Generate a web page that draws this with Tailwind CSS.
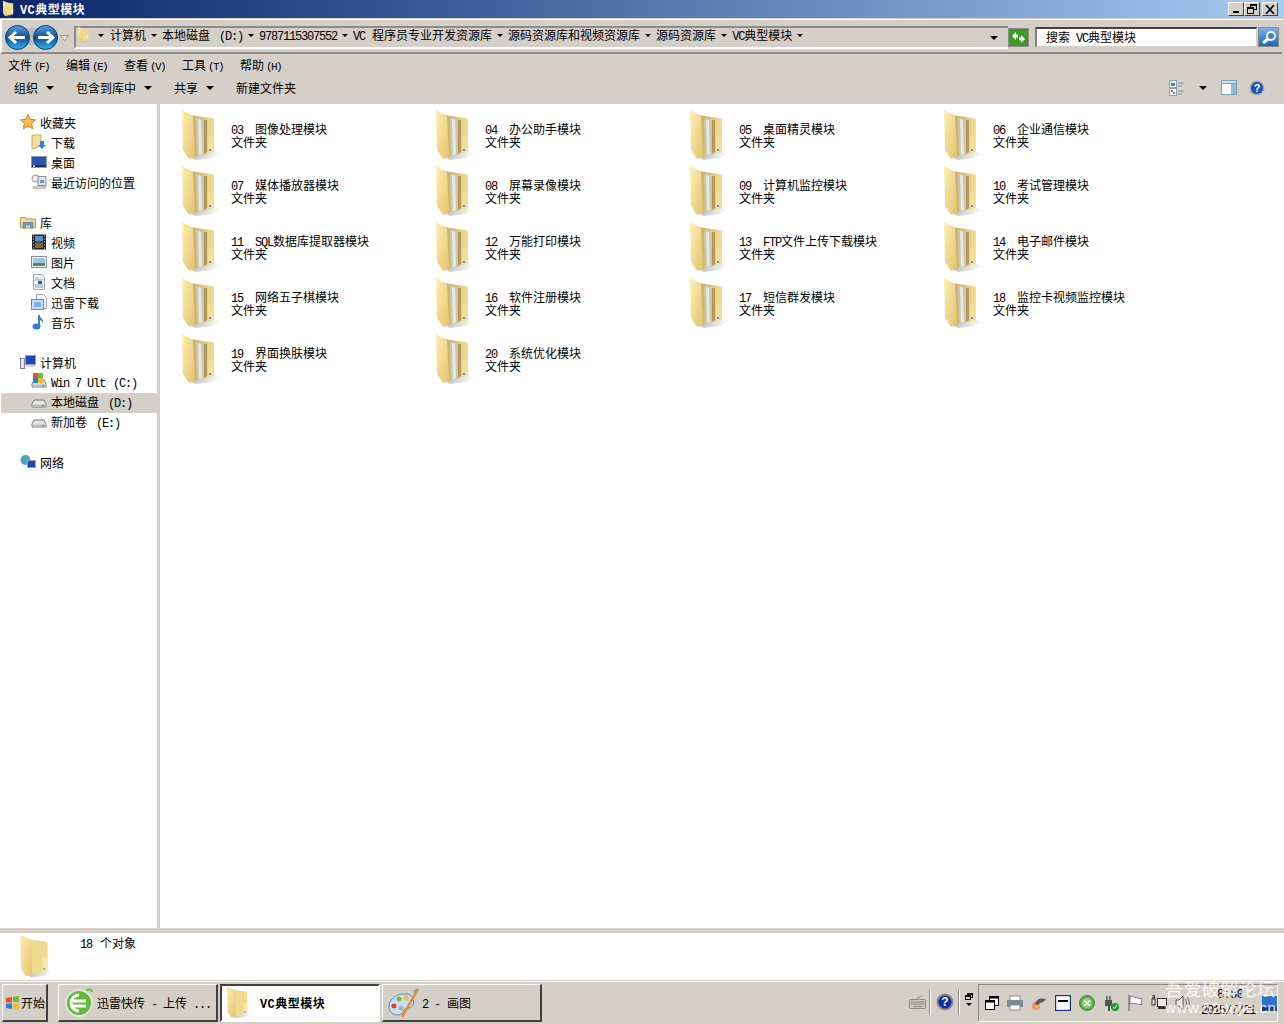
<!DOCTYPE html>
<html lang="zh-CN">
<head>
  <meta charset="UTF-8">
  <title>VC典型模块</title>
  <script src="https://cdn.jsdelivr.net/npm/@tailwindcss/browser@4"></script>
</head>
<body class="bg-white text-black text-[12px] leading-[13px] font-['Noto_Sans_CJK_SC',sans-serif]">
  <svg class="absolute w-0 h-0">
    <defs>
      <linearGradient id="flap" x1="0" y1="0" x2="1" y2="1"><stop offset="0" stop-color="#fdf0b4"/><stop offset="1" stop-color="#e3c36c"/></linearGradient>
      <linearGradient id="backp" x1="0" y1="0" x2="1" y2="0"><stop offset="0" stop-color="#c9a95c"/><stop offset="1" stop-color="#f3dd92"/></linearGradient>
      <linearGradient id="orb" x1="0" y1="0" x2="0" y2="1"><stop offset="0" stop-color="#5d9fe0"/><stop offset=".5" stop-color="#0b4f9c"/><stop offset="1" stop-color="#35b4e8"/></linearGradient>
      <linearGradient id="shade" x1="0" y1="0" x2="1" y2="0"><stop offset="0" stop-color="#8a8a8a" stop-opacity=".55"/><stop offset="1" stop-color="#8a8a8a" stop-opacity="0"/></linearGradient>
      <symbol id="folder" viewBox="0 0 50 56">
        <polygon points="14,49 36,44 45,45 36,50 20,52" fill="url(#shade)"/>
        <polygon points="14,7 35,10 38,11 38,44 18,49" fill="url(#backp)"/>
        <polygon points="20,10 27,11 28,47 21,49" fill="#c9c7b8"/>
        <polygon points="22,11 25,12 26,46 23,47" fill="#e8e8e2"/>
        <polygon points="28,12 31,12 31,44 28,46" fill="#b3995a"/>
        <polygon points="32,28 38,27 38,44 32,46" fill="#f3de98"/>
        <rect x="33" y="41" width="2" height="2" fill="#5b8fd0"/>
        <polygon points="6,2 17,8 19,48 13,51 7,42" fill="url(#flap)"/>
      </symbol>
      <symbol id="folder-closed" viewBox="0 0 50 56">
        <polygon points="14,49 36,44 45,45 36,50 20,52" fill="url(#shade)"/>
        <polygon points="14,7 35,10 38,11 38,44 18,49" fill="#f0da90"/>
        <polygon points="32,28 38,27 38,44 32,46" fill="#f7e7ac"/>
        <rect x="33" y="41" width="2" height="2" fill="#5b8fd0"/>
        <polygon points="6,2 19,8 20,48 13,51 7,42" fill="url(#flap)"/>
      </symbol>
      <symbol id="drive" viewBox="0 0 16 16">
        <path d="M3 6h10l2 4v3H1v-3z" fill="#e6e6e2" stroke="#77797b"/>
        <path d="M1.500 10.500h13v2.500h-13z" fill="#b9bcbd"/>
        <rect x="11" y="11" width="2" height="1.500" fill="#56b04a"/>
      </symbol>
    </defs>
  </svg>

  <div class="relative w-[1284px] h-[1024px] overflow-hidden flex flex-col bg-white">
    <!-- title bar -->
    <div class="h-[18px] flex items-center bg-gradient-to-r from-[#0a246a] to-[#a6caf0] shrink-0">
      <svg class="w-4 h-[18px] ml-px"><use href="#folder-closed"/></svg>
      <span class="ml-[3px] text-white font-bold tracking-[0.5px]"><span class="text-[12px] leading-[9px] tracking-[0.4px] font-['Liberation_Mono']">VC</span>典型模块</span>
      <div class="ml-auto mr-[6px] flex items-center">
        <div class="w-4 h-[14px] bg-[#d4d0c8] border-t border-l border-t-white border-l-white border-r border-b border-r-[#404040] border-b-[#404040] flex items-end justify-center pb-[2px]"><div class="w-[6px] h-[2px] bg-black"></div></div>
        <div class="w-4 h-[14px] ml-0 bg-[#d4d0c8] border-t border-l border-t-white border-l-white border-r border-b border-r-[#404040] border-b-[#404040] relative">
          <div class="absolute left-[5px] top-[1px] w-[7px] h-[6px] border border-black border-t-2"></div>
          <div class="absolute left-[2px] top-[4px] w-[7px] h-[7px] bg-[#d4d0c8] border border-black border-t-2"></div>
        </div>
        <div class="w-4 h-[14px] ml-[2px] bg-[#d4d0c8] border-t border-l border-t-white border-l-white border-r border-b border-r-[#404040] border-b-[#404040] flex items-center justify-center">
          <svg width="10" height="9" viewBox="0 0 10 9"><path d="M1 0l8 9M9 0l-8 9" stroke="#000" stroke-width="1.600"/></svg>
        </div>
      </div>
    </div>

    <!-- address row -->
    <div class="h-[36px] shrink-0 bg-[#d4d0c8] pt-px pr-[2px]">
      <div class="h-[35px] flex items-start border-t border-l-2 border-b-2 border-t-white border-l-white border-b-[#8d8b87] relative">
        <!-- back / forward -->
        <div class="relative w-[72px] h-[33px] shrink-0">
          <div class="absolute left-[8px] top-[8px] w-[46px] h-[17px] bg-[#bcbab6] rounded-[9px]"></div>
          <svg class="absolute left-[3px] top-[5px]" width="25" height="25" viewBox="0 0 25 25"><circle cx="12.500" cy="12.500" r="12" fill="url(#orb)" stroke="#0b3d78"/><path d="M5 12.500h15M11 7l-6 5.500 6 5.500" fill="none" stroke="#fff" stroke-width="3"/></svg>
          <svg class="absolute left-[31px] top-[5px]" width="25" height="25" viewBox="0 0 25 25"><circle cx="12.500" cy="12.500" r="12" fill="url(#orb)" stroke="#0b3d78"/><path d="M5 12.500h15M14 7l6 5.500-6 5.500" fill="none" stroke="#fff" stroke-width="3"/></svg>
          <svg class="absolute left-[58px] top-[15px]" width="9" height="6" viewBox="0 0 9 6"><path d="M.5.500h8l-4 5z" fill="#f2f1ee" stroke="#8d8b87"/></svg>
        </div>
        <!-- address box -->
        <div class="w-[934px] h-[23px] mt-[6px] pb-[6px] shrink-0 flex items-center border-t-2 border-l-2 border-t-[#8d8b87] border-l-[#8d8b87] border-b-2 border-b-white relative">
          <svg class="w-4 h-[18px] shrink-0"><use href="#folder-closed"/></svg>
          <div class="flex items-center gap-[5px] ml-[6px] whitespace-pre">
            <span class="mr-[1px] mt-[2px] w-0 h-0 border-x-[3px] border-t-[3px] border-x-transparent border-t-black"></span>
            <span>计算机</span>
            <span class="mt-[2px] w-0 h-0 border-x-[3px] border-t-[3px] border-x-transparent border-t-black"></span>
            <span>本地磁盘<span class="ml-[9px] text-[12px] leading-[9px] tracking-[-1.2px] font-['Liberation_Mono']">(D:)</span></span>
            <span class="mt-[2px] w-0 h-0 border-x-[3px] border-t-[3px] border-x-transparent border-t-black"></span>
            <span><span class="text-[12px] leading-[9px] tracking-[-1.2px] font-['Liberation_Mono']">9787115307552</span></span>
            <span class="mt-[2px] w-0 h-0 border-x-[3px] border-t-[3px] border-x-transparent border-t-black"></span>
            <span><span class="mr-[7px] text-[12px] leading-[9px] tracking-[-1.2px] font-['Liberation_Mono']">VC</span>程序员专业开发资源库</span>
            <span class="mt-[2px] w-0 h-0 border-x-[3px] border-t-[3px] border-x-transparent border-t-black"></span>
            <span>源码资源库和视频资源库</span>
            <span class="mt-[2px] w-0 h-0 border-x-[3px] border-t-[3px] border-x-transparent border-t-black"></span>
            <span>源码资源库</span>
            <span class="mt-[2px] w-0 h-0 border-x-[3px] border-t-[3px] border-x-transparent border-t-black"></span>
            <span><span class="text-[12px] leading-[9px] tracking-[-1.2px] font-['Liberation_Mono']">VC</span>典型模块</span>
            <span class="mt-[2px] w-0 h-0 border-x-[3px] border-t-[3px] border-x-transparent border-t-black"></span>
          </div>
          <span class="absolute left-[914px] top-[8px] w-0 h-0 border-x-[4px] border-t-[4px] border-x-transparent border-t-black"></span>
        </div>
        <!-- refresh -->
        <div class="w-[21px] h-[19px] mt-[8px] shrink-0 border border-[#8d8b87] bg-[#3a9a22] flex items-center justify-center">
          <svg width="15" height="13" viewBox="0 0 15 13"><path d="M1 5l4-4v2.500h2v3H5V9zM14 8l-4 4V9.500H8v-3h2V4z" fill="#fff"/></svg>
        </div>
        <!-- search -->
        <div class="w-[222px] h-[20px] mt-[7px] ml-[6px] pb-[2px] shrink-0 bg-white border-t-2 border-l-2 border-t-[#404040] border-l-[#808080] border-r border-b border-r-[#d4d0c8] border-b-[#d4d0c8] pl-[9px] flex items-center whitespace-pre"><span>搜索<span class="ml-[6px] text-[12px] leading-[9px] tracking-[-1.2px] font-['Liberation_Mono']">VC</span>典型模块</span></div>
        <div class="w-[21px] h-[20px] mt-[7px] ml-px shrink-0 border border-[#8d8b87] bg-gradient-to-b from-[#79b2ec] to-[#1f63b8] flex items-center justify-center">
          <svg width="16" height="15" viewBox="0 0 16 15"><circle cx="10" cy="6" r="4" fill="#3b7fcb" stroke="#fff" stroke-width="2"/><path d="M7 9l-5 4" stroke="#fff" stroke-width="3"/></svg>
        </div>
      </div>
    </div>

    <!-- menu bar -->
    <div class="h-[20px] shrink-0 bg-[#d4d0c8] flex items-center pl-[8px] whitespace-pre">
      <span class="w-[58px]">文件<span class="ml-[2px] text-[11px] leading-[8px] tracking-[-1.6px] font-['Liberation_Mono']">(F)</span></span>
      <span class="w-[58px]">编辑<span class="ml-[2px] text-[11px] leading-[8px] tracking-[-1.6px] font-['Liberation_Mono']">(E)</span></span>
      <span class="w-[58px]">查看<span class="ml-[2px] text-[11px] leading-[8px] tracking-[-1.6px] font-['Liberation_Mono']">(V)</span></span>
      <span class="w-[58px]">工具<span class="ml-[2px] text-[11px] leading-[8px] tracking-[-1.6px] font-['Liberation_Mono']">(T)</span></span>
      <span>帮助<span class="ml-[2px] text-[11px] leading-[8px] tracking-[-1.6px] font-['Liberation_Mono']">(H)</span></span>
    </div>

    <!-- toolbar -->
    <div class="h-[30px] shrink-0 bg-[#d4d0c8] flex items-center pl-[14px] pr-[19px] pb-[3px]">
      <span>组织</span>
      <span class="ml-[8px] mt-[1px] w-0 h-0 border-x-[4px] border-t-[4px] border-x-transparent border-t-black"></span>
      <span class="ml-[22px]">包含到库中</span>
      <span class="ml-[8px] mt-[1px] w-0 h-0 border-x-[4px] border-t-[4px] border-x-transparent border-t-black"></span>
      <span class="ml-[22px]">共享</span>
      <span class="ml-[8px] mt-[1px] w-0 h-0 border-x-[4px] border-t-[4px] border-x-transparent border-t-black"></span>
      <span class="ml-[22px]">新建文件夹</span>
      <svg class="ml-auto" width="16" height="16" viewBox="0 0 16 16"><rect x=".5" y=".5" width="7" height="7" fill="#f4f6f8" stroke="#8aa0b5"/><rect x="2" y="3" width="4" height="3" fill="#5c8a6a"/><rect x=".5" y="8.500" width="7" height="7" fill="#f4f6f8" stroke="#8aa0b5"/><rect x="2" y="10" width="2" height="2" fill="#c9503c"/><rect x="4" y="12" width="2" height="2" fill="#4a9a4a"/><path d="M9 3h6M9 6h4M9 11h6M9 14h4" stroke="#7890a8"/></svg>
      <span class="ml-[14px] w-0 h-0 border-x-[4px] border-t-[4px] border-x-transparent border-t-black"></span>
      <svg class="ml-[14px]" width="16" height="15" viewBox="0 0 16 15"><rect x=".5" y=".5" width="15" height="14" fill="#fff" stroke="#7f9db9"/><rect x=".5" y=".5" width="15" height="3" fill="#cfe0ef" stroke="#7f9db9"/><rect x="10" y="4" width="5" height="10" fill="#8fbbe0"/></svg>
      <svg class="ml-[12px]" width="16" height="16" viewBox="0 0 16 16"><circle cx="8" cy="8" r="7.500" fill="#a8a8a8"/><circle cx="8" cy="8" r="6" fill="#1c4fb0"/><text x="8" y="12" font-size="11" font-weight="bold" text-anchor="middle" fill="#fff" font-family="Liberation Sans">?</text></svg>
    </div>

    <!-- main area -->
    <div class="flex flex-1 min-h-0">
      <aside class="w-[157px] shrink-0 pt-[9px] pl-px">
        <div class="h-5 pb-[2px] flex items-center pl-[19px] gap-[4px]">
          <svg width="16" height="16" viewBox="0 0 16 16"><path d="M8 .5l2.200 4.900 5.300.5-4 3.600 1.200 5.300L8 12l-4.700 2.800 1.200-5.300-4-3.600 5.300-.5z" fill="#f8c04a" stroke="#e0752a"/></svg>
          <span>收藏夹</span>
        </div>
        <div class="h-5 pb-[2px] flex items-center pl-[30px] gap-[4px]">
          <svg width="16" height="16" viewBox="0 0 16 16"><path d="M1 1h9v11l-9 3z" fill="#f5e09a" stroke="#c9a95c"/><path d="M9 7h4v4h2l-4 4-4-4h2z" fill="#2f86d8"/></svg>
          <span>下载</span>
        </div>
        <div class="h-5 pb-[2px] flex items-center pl-[30px] gap-[4px]">
          <svg width="16" height="16" viewBox="0 0 16 16"><rect x=".5" y="2.500" width="15" height="11" fill="#2c55b0" stroke="#8a9aa8"/><rect x="1" y="11" width="14" height="2" fill="#23304a"/><rect x="2" y="11" width="2" height="2" fill="#e8b23c"/></svg>
          <span>桌面</span>
        </div>
        <div class="h-5 pb-[2px] flex items-center pl-[30px] gap-[4px]">
          <svg width="16" height="16" viewBox="0 0 16 16"><circle cx="4.500" cy="4.500" r="3.500" fill="#eef0ee" stroke="#8c8f8c"/><rect x="7" y="2.500" width="8" height="9" fill="#dfe3e3" stroke="#8c8f8c"/><rect x="9" y="6" width="4" height="3" fill="#5f94d0"/><rect x="2" y="12" width="13" height="3" fill="#c4c6c2"/></svg>
          <span>最近访问的位置</span>
        </div>
        <div class="h-5"></div>
        <div class="h-5 pb-[2px] flex items-center pl-[19px] gap-[4px]">
          <svg width="16" height="16" viewBox="0 0 16 16"><path d="M.5 3.500h5l1 1.500h9v9H.5z" fill="#f5de90" stroke="#b99a52"/><path d="M3 14V8.500h10V14h-2.500v-3h-5v3z" fill="#6fa0d4" stroke="#3c6ea8" stroke-width=".6"/></svg>
          <span>库</span>
        </div>
        <div class="h-5 pb-[2px] flex items-center pl-[30px] gap-[4px]">
          <svg width="16" height="16" viewBox="0 0 16 16"><rect x="1" y=".5" width="14" height="15" fill="#22262b"/><rect x="4" y="2" width="8" height="5.500" fill="#5a8cc8"/><rect x="4" y="8.500" width="8" height="5.500" fill="#7a6a3a"/><path d="M2 2h1M2 5h1M2 8h1M2 11h1M2 14h1M13 2h1M13 5h1M13 8h1M13 11h1M13 14h1" stroke="#dfe3e8"/></svg>
          <span>视频</span>
        </div>
        <div class="h-5 pb-[2px] flex items-center pl-[30px] gap-[4px]">
          <svg width="16" height="16" viewBox="0 0 16 16"><rect x=".5" y="2.500" width="15" height="11" fill="#f4f5f2" stroke="#8a9095"/><rect x="2" y="4" width="12" height="5" fill="#9ac4e8"/><rect x="2" y="9" width="12" height="3" fill="#4f9060"/></svg>
          <span>图片</span>
        </div>
        <div class="h-5 pb-[2px] flex items-center pl-[30px] gap-[4px]">
          <svg width="16" height="16" viewBox="0 0 16 16"><path d="M2.500.5h8l3 3v12h-11z" fill="#fbfbfb" stroke="#9aa0a6"/><path d="M4 6h8M4 11h8M4 13h8M4 4h4" stroke="#7d9cc0"/><rect x="7" y="7" width="4" height="3" fill="#345f96"/></svg>
          <span>文档</span>
        </div>
        <div class="h-5 pb-[2px] flex items-center pl-[30px] gap-[4px]">
          <svg width="16" height="16" viewBox="0 0 16 16"><path d="M5.500.5h7l3 3v11h-10z" fill="#f4f6f8" stroke="#9aa8b8"/><rect x=".5" y="5.500" width="12" height="10" fill="#c8dcf2" stroke="#5a8cc0"/><rect x="3" y="8" width="7" height="5" fill="#79b4ea"/></svg>
          <span>迅雷下载</span>
        </div>
        <div class="h-5 pb-[2px] flex items-center pl-[30px] gap-[4px]">
          <svg width="16" height="16" viewBox="0 0 16 16"><path d="M8 1v11" stroke="#1a5fb0" stroke-width="1.600"/><ellipse cx="5.500" cy="12.500" rx="4" ry="3" fill="#2c7fd6"/><path d="M8 1c1 3 5 4 4 8-.5-2-2-3-4-3z" fill="#2c7fd6"/></svg>
          <span>音乐</span>
        </div>
        <div class="h-5"></div>
        <div class="h-5 pb-[2px] flex items-center pl-[19px] gap-[4px]">
          <svg width="16" height="16" viewBox="0 0 16 16"><rect x="5.500" y="1.500" width="10" height="9" fill="#1a46c0" stroke="#9aa0a6"/><rect x="6" y="11" width="9" height="2" fill="#cfd2d4"/><rect x=".5" y="4.500" width="4" height="10" fill="#e6e8e8" stroke="#7d8286"/></svg>
          <span>计算机</span>
        </div>
        <div class="h-5 pb-[2px] flex items-center pl-[30px] gap-[4px] whitespace-pre">
          <span class="relative w-4 h-4">
            <svg class="absolute left-0 top-0" width="16" height="16"><use href="#drive"/></svg>
            <svg class="absolute left-[2px] top-[-1px]" width="10" height="10" viewBox="0 0 10 10"><rect width="5" height="5" fill="#e2552c"/><rect x="5" width="5" height="5" fill="#7cb73c"/><rect y="5" width="5" height="5" fill="#2e7fd0"/><rect x="5" y="5" width="5" height="5" fill="#f2bc2c"/></svg>
          </span>
          <span><span class="text-[12px] leading-[9px] tracking-[-1.2px] font-['Liberation_Mono']">Win 7 Ult<span class="ml-[8px]">(C:)</span></span></span>
        </div>
        <div class="h-5 pb-[2px] flex items-center pl-[30px] gap-[4px] bg-[#d4d0c8] whitespace-pre">
          <svg width="16" height="16"><use href="#drive"/></svg>
          <span>本地磁盘<span class="ml-[9px] text-[12px] leading-[9px] tracking-[-1.2px] font-['Liberation_Mono']">(D:)</span></span>
        </div>
        <div class="h-5 pb-[2px] flex items-center pl-[30px] gap-[4px] whitespace-pre">
          <svg width="16" height="16"><use href="#drive"/></svg>
          <span>新加卷<span class="ml-[9px] text-[12px] leading-[9px] tracking-[-1.2px] font-['Liberation_Mono']">(E:)</span></span>
        </div>
        <div class="h-5"></div>
        <div class="h-5 pb-[2px] flex items-center pl-[19px] gap-[4px]">
          <svg width="16" height="16" viewBox="0 0 16 16"><circle cx="5.500" cy="6" r="5" fill="#4aa0d8"/><path d="M3 3l4 1-1 3-3 0z" fill="#58b04c"/><rect x="7.500" y="6.500" width="8" height="7" fill="#1a46c0" stroke="#9aa0a6"/></svg>
          <span>网络</span>
        </div>
      </aside>
      <div class="w-[3px] shrink-0 bg-[#d4d0c8]"></div>
      <main id="grid" class="flex-1 grid grid-cols-[repeat(4,254px)] auto-rows-[56px] content-start pt-[4px] pl-[16px]"></main>
    </div>

    <!-- details pane -->
    <div class="h-[5px] shrink-0 bg-[#d4d0c8]"></div>
    <div class="h-[48px] shrink-0 flex bg-white border-b border-b-[#d4d0c8]">
      <svg class="w-[43px] h-[48px] ml-[15px] shrink-0"><use href="#folder-closed"/></svg>
      <span class="ml-[22px] mt-[3px]"><span class="mr-[8px] text-[12px] leading-[9px] tracking-[-1.2px] font-['Liberation_Mono']">18</span>个对象</span>
    </div>

    <!-- taskbar -->
    <div class="h-[43px] shrink-0 bg-[#d4d0c8] border-t border-t-white flex items-start pt-[2px] pl-[2px] whitespace-pre">
      <div class="w-[46px] h-[38px] flex items-center pl-[2px] border border-t-white border-l-white border-r-2 border-b-2 border-r-[#404040] border-b-[#404040]">
        <svg width="15" height="14" viewBox="0 0 15 14"><path d="M1 2l6-1v5.500H1z" fill="#e2552c"/><path d="M8 1l6-1v6H8z" fill="#7cb73c"/><path d="M1 7.500h6V13l-6-1z" fill="#2e7fd0"/><path d="M8 7.500h6V14l-6-1z" fill="#f2bc2c"/></svg>
        <span class="ml-px">开始</span>
      </div>
      <div class="ml-[10px] w-[160px] h-[38px] flex items-center pl-[5px] border border-t-white border-l-white border-r-2 border-b-2 border-r-[#404040] border-b-[#404040]">
        <svg width="30" height="32" viewBox="0 0 30 32"><circle cx="15" cy="16" r="13" fill="#63bb3c" stroke="#dfe7dc" stroke-width="2"/><path d="M22 3c4-1 6 0 6 2" fill="none" stroke="#63bb3c" stroke-width="2"/><path d="M8 14h14M8 19h14" stroke="#fff" stroke-width="3"/><path d="M15 8a8 8 0 0 0 0 16" fill="none" stroke="#fff" stroke-width="3"/></svg>
        <span class="ml-[3px]">迅雷快传<span class="mx-[6px] text-[12px] leading-[9px] tracking-[-1.2px] font-['Liberation_Mono']">-</span>上传<span class="ml-[6px] text-[12px] leading-[9px] tracking-[-1.2px] font-['Liberation_Mono']">...</span></span>
      </div>
      <div class="ml-[2px] w-[160px] h-[38px] bg-white flex items-center border-2 border-t-[#404040] border-l-[#404040] border-r-white border-b-white">
        <svg class="w-[32px] h-[36px] ml-[1px] shrink-0"><use href="#folder-closed"/></svg>
        <span class="ml-[5px] font-bold tracking-[0.5px]"><span class="text-[12px] leading-[9px] tracking-[0.4px] font-['Liberation_Mono']">VC</span>典型模块</span>
      </div>
      <div class="ml-[2px] w-[160px] h-[38px] flex items-center pl-[4px] border border-t-white border-l-white border-r-2 border-b-2 border-r-[#404040] border-b-[#404040]">
        <svg width="32" height="32" viewBox="0 0 32 32"><path d="M2 20c0-9 9-14 18-13 6 1 8 6 6 11-2 4-5 2-8 4s-2 6-7 6C6 28 2 25 2 20z" fill="#c8def2" stroke="#5b8bb8"/><circle cx="12" cy="12" r="2.500" fill="#7cb73c"/><circle cx="19" cy="11" r="2.500" fill="#f2bc2c"/><circle cx="7" cy="19" r="2.500" fill="#d9452c"/><circle cx="14" cy="21" r="2.500" fill="#a8b4c0"/><path d="M31 2L15 30" stroke="#e88a2c" stroke-width="2.500"/><path d="M31 1l-5 3 3 3z" fill="#b09a5c"/></svg>
        <span class="ml-[3px]"><span class="text-[12px] leading-[9px] tracking-[-1.2px] font-['Liberation_Mono']">2 -</span><span class="ml-[7px]">画图</span></span>
      </div>
      <!-- notification area -->
      <svg class="ml-[367px] mt-[11px]" width="17" height="14" viewBox="0 0 17 14"><rect x=".5" y="4.500" width="16" height="9" rx="1" fill="#c8c6c0" stroke="#8d8b87"/><path d="M2 7h13M2 9h13M4 11.500h9" stroke="#8d8b87"/><path d="M8 4c0-3 4-1 5-4" fill="none" stroke="#8d8b87"/></svg>
      <div class="ml-[3px] w-[2px] h-[26px] mt-[5px] bg-white border-l border-l-[#8d8b87]"></div>
      <svg class="ml-[5px] mt-[9px]" width="18" height="18" viewBox="0 0 18 18"><circle cx="9" cy="9" r="8.500" fill="#8a8a86"/><circle cx="9" cy="9" r="6.500" fill="#0e2ca8"/><text x="9" y="13" font-size="12" font-weight="bold" text-anchor="middle" fill="#fff" font-family="Liberation Sans">?</text></svg>
      <div class="ml-[4px] w-[2px] h-[26px] mt-[5px] bg-white border-l border-l-[#8d8b87]"></div>
      <div class="ml-[4px] mt-[9px] w-[9px] flex flex-col items-center gap-[3px]">
        <div class="relative w-[8px] h-[7px]"><div class="absolute right-0 top-0 w-[6px] h-[5px] border border-black border-t-2"></div><div class="absolute left-0 bottom-0 w-[6px] h-[5px] bg-[#d4d0c8] border border-black border-t-2"></div></div>
        <span class="w-0 h-0 border-x-[3px] border-t-[3px] border-x-transparent border-t-black"></span>
      </div>
      <div class="relative ml-[5px] w-[300px] h-[38px] border border-t-[#8d8b87] border-l-[#8d8b87] border-r-white border-b-white flex items-center pl-[6px] gap-[8px]">
        <svg width="14" height="14" viewBox="0 0 14 14"><rect x="4.500" y=".5" width="9" height="9" fill="#fff" stroke="#000"/><rect x="4.500" y=".5" width="9" height="2" fill="#000"/><rect x=".5" y="4.500" width="9" height="9" fill="#fff" stroke="#000"/><rect x=".5" y="4.500" width="9" height="2" fill="#000"/></svg>
        <svg width="16" height="16" viewBox="0 0 16 16"><rect x="3" y="1" width="10" height="5" fill="#fff" stroke="#8d8b87"/><rect x="0" y="5" width="16" height="7" fill="#7d8a9a"/><rect x="3" y="10" width="10" height="5" fill="#fff" stroke="#8d8b87"/></svg>
        <svg width="16" height="16" viewBox="0 0 16 16"><circle cx="5" cy="11" r="4" fill="#f08a7a"/><path d="M4 9c2-6 6-6 11-5-2 4-6 3-8 6z" fill="#5a5a5a"/><circle cx="6" cy="12" r="2" fill="#f2bc2c"/></svg>
        <svg width="16" height="16" viewBox="0 0 16 16"><rect x=".5" y=".5" width="15" height="15" fill="#fff" stroke="#17367c" stroke-width="1.400"/><path d="M3 6h10" stroke="#000" stroke-width="2"/></svg>
        <svg width="16" height="16" viewBox="0 0 16 16"><circle cx="8" cy="8" r="7.500" fill="#5ab04a" stroke="#3c8a30"/><circle cx="8" cy="8" r="5" fill="#8ed07a"/><path d="M5 5l6 6M11 5l-6 6" stroke="#fff" stroke-width="1.400"/></svg>
        <svg width="16" height="16" viewBox="0 0 16 16"><rect x="2" y="5" width="7" height="6" fill="#555"/><path d="M4 1v4M7 1v4" stroke="#555" stroke-width="1.400"/><rect x="5" y="11" width="2" height="5" fill="#555"/><circle cx="12" cy="12" r="4" fill="#1f9a2e"/><path d="M10 12l1.500 1.500L14 10" stroke="#fff" fill="none"/></svg>
        <svg width="16" height="16" viewBox="0 0 16 16"><path d="M2 0v16" stroke="#77797b" stroke-width="1.400"/><path d="M3 1.500c4-1 5 2 12 2-1 3-1 3 0 6-6 0-8-2-12-1z" fill="#fff" stroke="#77797b"/></svg>
        <svg width="16" height="16" viewBox="0 0 16 16"><rect x="6.500" y="3.500" width="9" height="8" fill="#e8e8e4" stroke="#333"/><rect x="7" y="12" width="8" height="2" fill="#333"/><rect x="1" y="4" width="3" height="6" fill="#e8e8e4" stroke="#333"/><path d="M2 0v4M3.500 0v4" stroke="#333"/></svg>
        <svg width="16" height="16" viewBox="0 0 16 16"><path d="M1 5h3l4-4v14l-4-4H1z" fill="#e8e8e4" stroke="#555"/><path d="M10 4c2 2 2 6 0 8M12 2c3 3 3 9 0 12" fill="none" stroke="#777"/></svg>
        <span class="absolute left-[238px] top-[4px] text-[12px] leading-[13px] tracking-[-0.6px] font-['Liberation_Mono']">8:50</span>
        <span class="absolute left-[222px] top-[20px] text-[12px] leading-[13px] tracking-[-1.2px] font-['Liberation_Mono']">2015/7/21</span>
        <svg class="absolute left-[283px] top-[11px]" width="15" height="15" viewBox="0 0 15 15"><rect width="15" height="15" fill="#2f73c8"/><rect y="11" width="15" height="4" fill="#1b3f78"/></svg>
      </div>
    </div>

    <!-- forum watermark over the tray -->
    <div class="absolute left-[1165px] top-[977px] w-[115px] text-white/85 text-[18px] leading-[22px] tracking-[0.4px] pointer-events-none">
      <div class="whitespace-nowrap">吾爱破解论坛</div>
      <div class="whitespace-nowrap text-[15px] leading-[18px] font-['Liberation_Sans'] tracking-[0.5px]">www.52pojie.cn</div>
    </div>
  </div>

  <script>
    // folder rows, left to right
    const folders = [
      ["03", "图像处理模块"], ["04", "办公助手模块"], ["05", "桌面精灵模块"], ["06", "企业通信模块"],
      ["07", "媒体播放器模块"], ["08", "屏幕录像模块"], ["09", "计算机监控模块"], ["10", "考试管理模块"],
      ["11", "SQL数据库提取器模块"], ["12", "万能打印模块"], ["13", "FTP文件上传下载模块"], ["14", "电子邮件模块"],
      ["15", "网络五子棋模块"], ["16", "软件注册模块"], ["17", "短信群发模块"], ["18", "监控卡视频监控模块"],
      ["19", "界面换肤模块"], ["20", "系统优化模块"]
    ];
    const lat = "text-[12px] leading-[9px] tracking-[-1.2px] font-['Liberation_Mono']";
    const grid = document.getElementById("grid");
    folders.forEach(([num, name]) => {
      const label = name.replace(/^[A-Z]+/, m => `<span class="${lat}">${m}</span>`);
      grid.insertAdjacentHTML("beforeend", `
        <div class="flex items-start">
          <svg class="w-[50px] h-[56px] shrink-0"><use href="#folder"/></svg>
          <div class="ml-[5px] mt-[14px]">
            <div class="h-[13px] whitespace-nowrap"><span class="mr-[12px] ${lat}">${num}</span>${label}</div>
            <div class="h-[13px]">文件夹</div>
          </div>
        </div>`);
    });
  </script>
</body>
</html>
